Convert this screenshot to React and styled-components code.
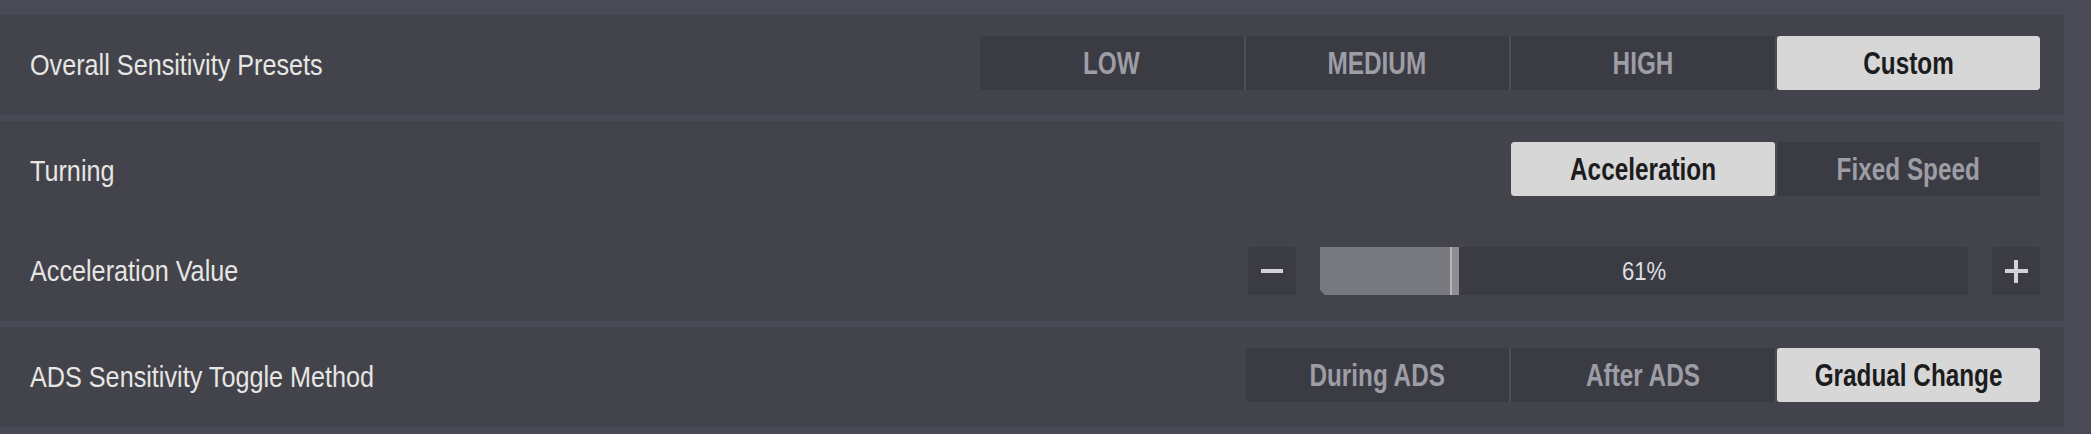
import React from "react";
import styled, { createGlobalStyle } from "styled-components";

const GlobalStyle = createGlobalStyle`
  html, body {
    margin: 0;
    padding: 0;
    background: #4a4a56;
  }
  * {
    box-sizing: border-box;
  }
`;

const presets = [
  { id: "low", text: "LOW" },
  { id: "medium", text: "MEDIUM" },
  { id: "high", text: "HIGH" },
  { id: "custom", text: "Custom" },
];

const turning = [
  { id: "accel", text: "Acceleration" },
  { id: "fixed", text: "Fixed Speed" },
];

const adsModes = [
  { id: "during", text: "During ADS" },
  { id: "after", text: "After ADS" },
  { id: "gradual", text: "Gradual Change" },
];

// slider range, the bar fill is worked out from it
const ACCEL = { value: 61, min: 50, max: 105 };

const Segmented = ({ items, active }) => (
  <Group>
    {items.map((it) => (
      <Cell key={it.id} active={it.id === active}>
        <CellText>{it.text}</CellText>
      </Cell>
    ))}
  </Group>
);

const Stepper = ({ value, min, max }) => {
  const pct = ((value - min) / (max - min)) * 100;
  return (
    <StepWrap>
      <StepBtn>
        <MinusBar />
      </StepBtn>
      <Track>
        <Fill style={{ width: pct + "%" }}>
          <Handle />
        </Fill>
        <Percent>{value}%</Percent>
      </Track>
      <StepBtn>
        <PlusMark />
      </StepBtn>
    </StepWrap>
  );
};

const App = () => {
  return (
    <Page>
      <GlobalStyle />
      <Panel>
        <Row>
          <Label>Overall Sensitivity Presets</Label>
          <Segmented items={presets} active="custom" />
        </Row>
      </Panel>

      <Panel>
        <Row>
          <Label>Turning</Label>
          <Segmented items={turning} active="accel" />
        </Row>
        <Row>
          <Label>Acceleration Value</Label>
          <Stepper {...ACCEL} />
        </Row>
      </Panel>

      <Panel>
        <Row>
          <Label>ADS Sensitivity Toggle Method</Label>
          <Segmented items={adsModes} active="gradual" />
        </Row>
      </Panel>
    </Page>
  );
};

const Page = styled.div`
  width: 2091px;
  height: 434px;
  padding: 15px 27px 0 0;
  display: flex;
  flex-direction: column;
  gap: 6px;
  background: #4a4a56;
  font-family: "Liberation Sans", Arial, sans-serif;
`;

const Panel = styled.div`
  display: flex;
  flex-direction: column;
  background: #43434c;
  border-radius: 0 4px 4px 0;
`;

const Row = styled.div`
  height: 100px;
  display: flex;
  align-items: center;
  justify-content: space-between;
  padding: 0 24px 0 30px;
`;

const Label = styled.span`
  display: inline-block;
  font-size: 30px;
  color: #e6e6e3;
  white-space: nowrap;
  transform: scaleX(0.84);
  transform-origin: left center;
`;

const Group = styled.div`
  display: flex;
  gap: 2px;
  margin-bottom: 4px;
  background: #4d4d57;
  border-radius: 3px;
  overflow: hidden;
`;

const Cell = styled.div`
  width: 263.5px;
  height: 54px;
  display: flex;
  align-items: center;
  justify-content: center;
  background: ${(p) => (p.active ? "#d7d7d7" : "#3b3b43")};
  color: ${(p) => (p.active ? "#1c1c1e" : "#9d9da5")};
  border-radius: ${(p) => (p.active ? "3px" : "0")};
`;

const CellText = styled.span`
  display: inline-block;
  font-size: 32px;
  font-weight: 700;
  white-space: nowrap;
  transform: scaleX(0.76);
`;

const StepWrap = styled.div`
  display: flex;
  align-items: center;
  gap: 24px;
`;

const StepBtn = styled.div`
  width: 48px;
  height: 48px;
  display: flex;
  align-items: center;
  justify-content: center;
  background: #3b3b43;
  border-radius: 4px;
  position: relative;
`;

const MinusBar = styled.div`
  width: 22px;
  height: 4px;
  background: #d2d2d6;
`;

const PlusMark = styled.div`
  width: 23px;
  height: 23px;
  position: relative;

  &::before,
  &::after {
    content: "";
    position: absolute;
    background: #d2d2d6;
  }
  &::before {
    left: 0;
    right: 0;
    top: 9.5px;
    height: 4px;
  }
  &::after {
    top: 0;
    bottom: 0;
    left: 9.5px;
    width: 4px;
  }
`;

const Track = styled.div`
  width: 648px;
  height: 48px;
  position: relative;
  display: flex;
  align-items: center;
  justify-content: center;
  background: #3b3b43;
  border-radius: 3px;
  clip-path: polygon(0 0, 100% 0, 100% 100%, 5px 100%, 0 calc(100% - 5px));
`;

const Fill = styled.div`
  position: absolute;
  left: 0;
  top: 0;
  bottom: 0;
  background: #78787f;
`;

const Handle = styled.div`
  position: absolute;
  right: -9px;
  top: 0;
  bottom: 0;
  width: 9px;
  background: #8d8d93;
  border-left: 2px solid #b3b3b8;
`;

const Percent = styled.span`
  position: relative;
  display: inline-block;
  font-size: 26px;
  color: #dedee0;
  transform: scaleX(0.85);
`;

export default App;
